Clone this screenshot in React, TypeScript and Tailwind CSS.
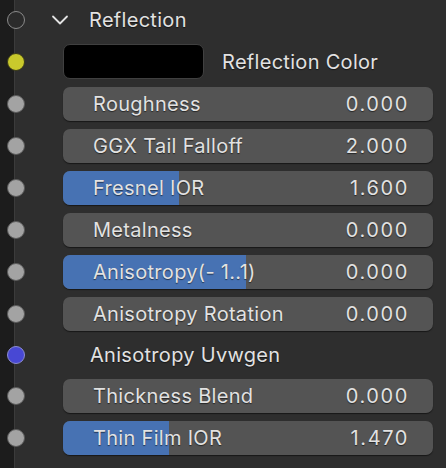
import React from 'react';

type Row =
  | { kind: 'field'; label: string; value: string; fill?: number }
  | { kind: 'plain'; label: string; socket: string };

const rows: Row[] = [
  { kind: 'field', label: 'Roughness', value: '0.000' },
  { kind: 'field', label: 'GGX Tail Falloff', value: '2.000' },
  { kind: 'field', label: 'Fresnel IOR', value: '1.600', fill: 116 },
  { kind: 'field', label: 'Metalness', value: '0.000' },
  { kind: 'field', label: 'Anisotropy(- 1..1)', value: '0.000', fill: 183 },
  { kind: 'field', label: 'Anisotropy Rotation', value: '0.000' },
  { kind: 'plain', label: 'Anisotropy Uvwgen', socket: 'blue' },
  { kind: 'field', label: 'Thickness Blend', value: '0.000' },
  { kind: 'field', label: 'Thin Film IOR', value: '1.470', fill: 106 },
];

const shadow = '[text-shadow:0_1px_1px_rgba(0,0,0,0.55)]';

function Socket({ tone }: { tone: string }) {
  const cls =
    tone === 'yellow'
      ? 'bg-[#c9c92c] border-[#3a3a1a]'
      : tone === 'blue'
        ? 'bg-[#4848d4] border-[#8c8ccf]'
        : tone === 'hollow'
          ? 'bg-[#2b2b2b] border-[#8a8a8a]'
          : 'bg-[#a3a3a3] border-[#5a5a5a]';
  return (
    <span
      className={`absolute left-[-8px] top-1/2 -translate-y-1/2 h-[18px] w-[18px] rounded-full border-[1.5px] ${cls}`}
    />
  );
}

export default function App() {
  return (
    <div
      className="flex h-[468px] w-[446px] bg-[#2e2e2e] text-[20px] tracking-[0.3px] text-[#e2e2e2]"
      style={{ fontFamily: 'Inter, "Noto Sans", sans-serif' }}
    >
      <div className="w-[15px] shrink-0 bg-[#1c1c1c] border-r border-[#3b3b3b]" />
      <div className="flex flex-1 flex-col pr-[13px]">
        <div className="relative flex h-[40px] items-center">
          <Socket tone="hollow" />
          <svg className="ml-[36px] h-[12px] w-[18px]" viewBox="0 0 18 12" fill="none">
            <path d="M2 2.5 L9 9.5 L16 2.5" stroke="#e2e2e2" strokeWidth="1.8" strokeLinecap="round" strokeLinejoin="round" />
          </svg>
          <span className={`ml-[20px] ${shadow}`}>Reflection</span>
        </div>

        <div className="relative mt-[4px] flex h-[35px] items-center">
          <Socket tone="yellow" />
          <div className="ml-[48px] h-[35px] w-[141px] rounded-[7px] border border-[#404040] bg-black" />
          <span className={`ml-[18px] ${shadow}`}>Reflection Color</span>
        </div>

        <div className="mt-[8px] flex flex-col gap-[8px]">
          {rows.map((r) =>
            r.kind === 'plain' ? (
              <div key={r.label} className="relative flex h-[32px] items-center">
                <Socket tone={r.socket} />
                <span className={`ml-[75px] ${shadow}`}>{r.label}</span>
              </div>
            ) : (
              <div key={r.label} className="relative flex h-[34px] items-center">
                <Socket tone="gray" />
                <div className="relative ml-[48px] flex h-[34px] flex-1 items-center justify-between overflow-hidden rounded-[7px] bg-[#545454] pl-[30px] pr-[24px] shadow-[0_1px_1px_rgba(0,0,0,0.5)]">
                  {r.fill && (
                    <div className="absolute inset-y-0 left-0 bg-[#4772b3]" style={{ width: r.fill }} />
                  )}
                  <span className={`relative ${shadow}`}>{r.label}</span>
                  <span className={`relative tracking-[1.6px] ${shadow}`}>{r.value}</span>
                </div>
              </div>
            ),
          )}
        </div>
      </div>
    </div>
  );
}
